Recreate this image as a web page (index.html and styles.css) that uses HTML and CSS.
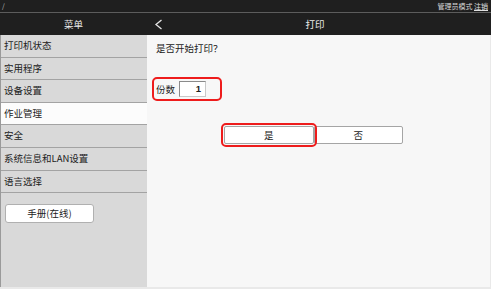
FILE: index.html
```html
<!DOCTYPE html>
<html lang="zh-CN">
<head>
<meta charset="utf-8">
<link rel="stylesheet" href="styles.css">
</head>
<body>
<div class="page">
  <div class="topbar">
    <span class="path">/</span>
    <span class="admin">管理员模式 <a class="logout">注销</a></span>
  </div>
  <div class="header">
    <div class="menu-title">菜单</div>
    <div class="page-head">
      <svg class="back" width="9" height="11" viewBox="0 0 9 11"><polyline points="7.5,1 2,5.5 7.5,10" fill="none" stroke="#e6e6e6" stroke-width="1.3"/></svg>
      <div class="page-title">打印</div>
    </div>
  </div>
  <div class="main">
    <nav class="sidebar">
      <div class="nav-item">打印机状态</div>
      <div class="nav-item">实用程序</div>
      <div class="nav-item">设备设置</div>
      <div class="nav-item active">作业管理</div>
      <div class="nav-item">安全</div>
      <div class="nav-item">系统信息和LAN设置</div>
      <div class="nav-item">语言选择</div>
      <div class="manual-wrap"><button class="manual">手册(在线)</button></div>
    </nav>
    <section class="content">
      <p class="question">是否开始打印？</p>
      <div class="copies">
        <span class="copies-label">份数</span>
        <span class="copies-input">1</span>
      </div>
      <div class="actions">
        <button class="btn btn-yes">是</button>
        <button class="btn">否</button>
      </div>
    </section>
  </div>
</div>
</body>
</html>
```
FILE: styles.css
```css
* { box-sizing: border-box; }
html, body { margin: 0; padding: 0; }
body {
  width: 491px;
  height: 289px;
  overflow: hidden;
  background: #e9e9e9;
  font-family: "Noto Sans CJK SC", "Noto Sans", sans-serif;
  color: #222;
}
.page { width: 491px; }
.topbar {
  height: 13px;
  background: #1f1f1f;
  border-bottom: 1px solid #5c5c5c;
  display: flex;
  justify-content: space-between;
  align-items: center;
  padding: 0 3px 0 2px;
  font-size: 7px;
  line-height: 12px;
  color: #d8d8d8;
}
.path { color: #bbb; font-size: 7px; }
.logout { text-decoration: underline; color: #e0e0e0; }
.header {
  height: 22px;
  background: #1f1f1f;
  display: flex;
  color: #ececec;
  font-size: 9.5px;
  line-height: 22px;
}
.menu-title { width: 147px; text-align: center; }
.page-head {
  flex: 1;
  display: flex;
  align-items: center;
  padding-left: 7px;
}
.back { display: block; flex: none; }
.page-title { flex: 1; text-align: center; padding-right: 24px; }
.main {
  display: flex;
  height: 252px;
  width: 490px;
}
.sidebar {
  width: 147px;
  background: #d9d9d9;
  border-left: 1px solid #9a9a9a;
  display: flex;
  flex-direction: column;
}
.nav-item {
  height: 22.6px;
  line-height: 21.6px;
  padding-left: 3px;
  font-size: 9.5px;
  border-bottom: 1px solid #a3a3a3;
  white-space: nowrap;
}
.nav-item.active { background: #fcfcfc; }
.manual-wrap { padding: 5px 0 0 4px; }
.manual {
  width: 89px;
  height: 19px;
  background: #fff;
  border: 1px solid #b0b0b0;
  border-radius: 3px;
  font-family: inherit;
  font-size: 9.5px;
  color: #222;
  padding: 0;
}
.content {
  flex: 1;
  background: #f7f7f7;
  padding-left: 9px;
}
.question {
  margin: 7px 0 0;
  font-size: 9.5px;
  line-height: 12px;
}
.copies {
  margin: 23px 0 0 -4px;
  width: 70px;
  height: 24px;
  border: 2px solid #ee1c1c;
  border-radius: 5px;
  display: flex;
  align-items: center;
  padding-left: 2px;
  font-size: 9.5px;
}
.copies-label { width: 23px; }
.copies-input {
  width: 27px;
  height: 16px;
  background: #fff;
  border: 1px solid #8a8a8a;
  border-right-color: #c8c8c8;
  border-bottom-color: #c8c8c8;
  text-align: right;
  padding-right: 4px;
  font-family: "Liberation Sans", sans-serif;
  font-weight: bold;
  font-size: 9.5px;
  line-height: 14px;
}
.actions {
  display: flex;
  margin: 25px 0 0 68px;
}
.btn {
  width: 89.5px;
  height: 18px;
  background: #fff;
  border: 1px solid #a5a5a5;
  border-radius: 2px;
  font-family: inherit;
  font-size: 9.5px;
  color: #222;
  padding: 0;
  line-height: 16px;
}
.btn-yes {
  outline: 2px solid #ee1c1c;
  outline-offset: 1px;
  position: relative;
  z-index: 1;
}
```
